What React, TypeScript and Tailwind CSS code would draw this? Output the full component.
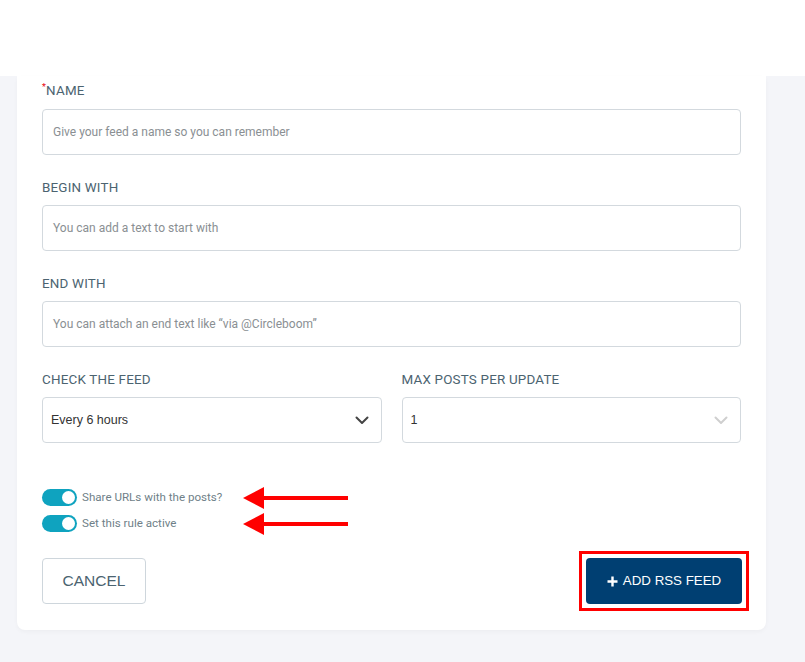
import React from 'react';

const labelCls =
  "mb-[10px] block text-[13.4px] leading-[14px] uppercase text-[#4b6370] font-['Roboto',sans-serif] tracking-[0.2px]";

function TextField({ label, placeholder, required }: { label: string; placeholder: string; required?: boolean }) {
  return (
    <div>
      <label className={labelCls}>
        {required && <span className="relative -top-[5px] text-[9px] text-red-600">*</span>}
        {label}
      </label>
      <div className="flex h-[46px] items-center rounded-[4px] border border-[#d3d9de] bg-white px-[10px]">
        <span className="font-['Roboto',sans-serif] text-[12px] text-[#8a8f93]">{placeholder}</span>
      </div>
    </div>
  );
}

function Chevron({ color }: { color: string }) {
  return (
    <svg width="14" height="9" viewBox="0 0 14 9" fill="none">
      <path d="M1.5 1.5L7 7L12.5 1.5" stroke={color} strokeWidth="2" strokeLinecap="round" strokeLinejoin="round" />
    </svg>
  );
}

function SelectField({ label, value, chevron }: { label: string; value: string; chevron: string }) {
  return (
    <div className="flex-1">
      <label className={labelCls}>{label}</label>
      <div className="flex h-[46px] items-center justify-between rounded-[4px] border border-[#d3d9de] bg-white pl-[8px] pr-[12px]">
        <span className="font-['Liberation_Sans',sans-serif] text-[12.5px] text-[#333]">{value}</span>
        <Chevron color={chevron} />
      </div>
    </div>
  );
}

function Toggle({ label }: { label: string }) {
  return (
    <div className="flex w-[201px] items-center gap-[5px]">
      <span className="flex h-[17px] w-[35px] items-center justify-end rounded-full bg-[#0fa3bf] pr-[2px]">
        <span className="h-[13px] w-[13px] rounded-full bg-white" />
      </span>
      <span className="font-['Roboto',sans-serif] text-[11.6px] text-[#6f7f88]">{label}</span>
    </div>
  );
}

function Arrow() {
  return (
    <svg width="105" height="22" viewBox="0 0 105 22" className="overflow-visible">
      <path d="M0 11 L21 0 L21 22 Z" fill="#ff0000" />
      <rect x="19" y="9" width="86" height="4" fill="#ff0000" />
    </svg>
  );
}

export default function App() {
  return (
    <div className="min-h-[662px] w-[805px] bg-[#f4f5f9]">
      <div className="h-[76px] bg-white" />
      <div className="ml-[17px] w-[749px] rounded-b-[8px] bg-white px-[25px] pb-[26px] pt-[8px] shadow-[0_2px_4px_rgba(0,0,0,0.03)]">
        <div className="flex flex-col gap-[26px]">
          <TextField required label="Name" placeholder="Give your feed a name so you can remember" />
          <TextField label="Begin with" placeholder="You can add a text to start with" />
          <TextField label="End with" placeholder="You can attach an end text like “via @Circleboom”" />
          <div className="flex gap-[20px]">
            <SelectField label="Check the feed" value="Every 6 hours" chevron="#444" />
            <SelectField label="Max posts per update" value="1" chevron="#cfcfcf" />
          </div>
        </div>
        <div className="mt-[46px] flex flex-col gap-[9px]">
          <div className="flex h-[17px] items-center">
            <Toggle label="Share URLs with the posts?" />
            <span className="flex"><Arrow /></span>
          </div>
          <div className="flex h-[17px] items-center">
            <Toggle label="Set this rule active" />
            <span className="flex"><Arrow /></span>
          </div>
        </div>
        <div className="mt-[26px] flex items-center justify-between">
          <button className="h-[46px] w-[104px] rounded-[4px] border border-[#ced6dc] bg-white font-['Liberation_Sans',sans-serif] text-[15.5px] text-[#4b6370]">
            CANCEL
          </button>
          <div className="-mr-[8px] -my-[7px] border-[3px] border-[#ff0000] p-[4px]">
            <button className="flex h-[46px] w-[156px] items-center justify-center gap-[5px] rounded-[4px] bg-[#003f72] font-['Liberation_Sans',sans-serif] text-[13.3px] text-white">
              <svg width="11" height="11" viewBox="0 0 11 11">
                <path d="M5.5 0.5V10.5M0.5 5.5H10.5" stroke="white" strokeWidth="2.4" />
              </svg>
              ADD RSS FEED
            </button>
          </div>
        </div>
      </div>
    </div>
  );
}
